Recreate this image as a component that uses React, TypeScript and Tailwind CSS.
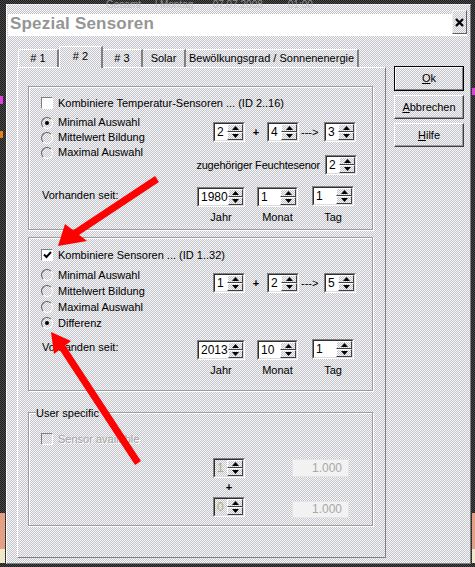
import React from 'react';

const chk = 'bg-[image:repeating-conic-gradient(#c4c4cc_0_25%,#f7f7f7_0_50%)] bg-[length:2px_2px]';
const dark = 'bg-[image:repeating-conic-gradient(#4a4a4a_0_25%,#1c1c1c_0_50%)] bg-[length:2px_2px]';

function Arr({ up }: { up?: boolean }) {
  return (
    <div
      className={`flex flex-1 items-center justify-center border border-t-white border-l-white border-r-[#404040] border-b-[#404040] ${chk}`}
    >
      <svg width="7" height="4" viewBox="0 0 7 4">
        {up ? <polygon points="3.5,0 7,4 0,4" fill="#000" /> : <polygon points="0,0 7,0 3.5,4" fill="#000" />}
      </svg>
    </div>
  );
}

function Spin({ v, w, dis }: { v: string; w: string; dis?: boolean }) {
  return (
    <div className={`h-[20px] shrink-0 border border-t-[#808080] border-l-[#808080] border-r-white border-b-white ${w}`}>
      <div className="flex h-full border border-t-[#303030] border-l-[#303030] border-r-[#dcdcdc] border-b-[#dcdcdc]">
        <div
          className={`flex flex-1 items-center pl-[2px] text-[12px] ${dis ? 'text-[#b4ac7c] ' + chk : 'bg-white text-black'}`}
        >
          {v}
        </div>
        <div className="flex w-[16px] flex-col">
          <Arr up />
          <Arr />
        </div>
      </div>
    </div>
  );
}

function Check({ checked, dis }: { checked?: boolean; dis?: boolean }) {
  return (
    <div
      className={`flex h-[12px] w-[12px] shrink-0 items-center justify-center border border-t-[#808080] border-l-[#808080] border-r-white border-b-white ${dis ? chk : 'bg-white'}`}
    >
      {checked && (
        <svg width="9" height="8" viewBox="0 0 9 8">
          <path d="M1 3.5 L3.5 6 L8 1" stroke="#000" strokeWidth="2" fill="none" />
        </svg>
      )}
    </div>
  );
}

function Radio({ label, on }: { label: string; on?: boolean }) {
  return (
    <div className="flex items-center gap-[5px]">
      <div
        className={`flex h-[12px] w-[12px] items-center justify-center rounded-full border border-t-[#606060] border-l-[#606060] border-r-white border-b-white ${chk}`}
      >
        {on && <div className="h-[4px] w-[4px] rounded-full bg-black" />}
      </div>
      <span>{label}</span>
    </div>
  );
}

function Sum({ a, b, c }: { a: string; b: string; c: string }) {
  return (
    <div className="flex h-[20px] items-center pl-[16px]">
      <Spin v={a} w="w-[32px]" />
      <span className="w-[22px] text-center font-bold">+</span>
      <Spin v={b} w="w-[32px]" />
      <span className="w-[25px] pl-[2px]">---&gt;</span>
      <Spin v={c} w="w-[32px]" />
    </div>
  );
}

function Dates({ y, m, d, lh }: { y: string; m: string; d: string; lh: string }) {
  return (
    <div className="flex">
      <div className={`flex w-[156px] items-center pl-[1px] ${lh}`}>Vorhanden seit:</div>
      <div className="flex">
        <div className="flex w-[48px] flex-col items-center">
          <Spin v={y} w="w-[48px]" />
          <span className="mt-[5px] h-[14px]">Jahr</span>
        </div>
        <div className="ml-[12px] flex w-[41px] flex-col items-center">
          <Spin v={m} w="w-[41px]" />
          <span className="mt-[5px] h-[14px]">Monat</span>
        </div>
        <div className="ml-[14px] flex w-[42px] -mt-[1px] flex-col items-center">
          <Spin v={d} w="w-[42px]" />
          <span className="mt-[6px] h-[14px]">Tag</span>
        </div>
      </div>
    </div>
  );
}

const group = 'relative w-[345px] border border-[#9c9c9c] pl-[12px] shadow-[inset_1px_1px_0_#fff,1px_1px_0_#fff]';

export default function App() {
  return (
    <div className={`relative h-[567px] w-[475px] overflow-hidden font-['Liberation_Sans',Arial,sans-serif] text-[11px] leading-none text-black ${dark}`}>
      <div className="pl-[6px] pt-[4px]">
        <div className={`flex h-[560px] w-[465px] flex-col border border-t-[#eeeeee] border-l-white border-r-[#808080] border-b-[#808080] ${chk}`}>
          {/* title */}
          <div className="ml-[1px] mt-[8px] flex h-[23px] w-[459px] items-start justify-between border-t border-dotted border-[#b8b8b8] bg-white">
            <div className="flex h-[22px] items-center pb-[3px] pl-[2px] text-[17px] font-bold tracking-[0.2px] text-[#959595]">
              Spezial Sensoren
            </div>
            <div
              className={`-mt-[4px] flex h-[24px] w-[15px] items-center justify-center border border-t-[#f0f0f0] border-l-[#f0f0f0] border-r-[#606060] border-b-[#606060] ${chk}`}
            >
              <svg width="9" height="9" viewBox="0 0 9 9">
                <path d="M1 1 L8 8 M8 1 L1 8" stroke="#000" strokeWidth="2.2" />
              </svg>
            </div>
          </div>

          {/* body */}
          <div className="flex pl-[10px] pt-[10px]">
            <div className="flex w-[369px] flex-col">
              <div className="flex h-[21px] items-end pl-[1px]">
                <div className="flex h-[18px] w-[41px] items-center justify-center rounded-tl-[2px] border-t border-l border-white border-r-2 border-r-[#808080]">
                  # 1
                </div>
                <div className={`relative z-10 -mb-[1px] flex h-[22px] w-[44px] items-center justify-center rounded-tl-[2px] border-t border-l border-white border-r-2 border-r-[#808080] pb-[3px] ${chk}`}>
                  # 2
                </div>
                <div className="flex h-[18px] w-[40px] items-center justify-center border-t border-white border-r-2 border-r-[#808080]">
                  # 3
                </div>
                <div className="flex h-[18px] w-[43px] items-center justify-center border-t border-white border-r-2 border-r-[#808080]">
                  Solar
                </div>
                <div className="flex h-[18px] w-[173px] items-center justify-center border-t border-white border-r-2 border-r-[#808080]">
                  Bewölkungsgrad / Sonnenenergie
                </div>
              </div>

              <div className="flex h-[491px] w-[369px] flex-col border border-t-white border-l-white border-r-[#808080] border-b-[#808080] pl-[10px] pt-[18px]">
                {/* group 1 */}
                <div className={`${group} h-[144px] pt-[10px]`}>
                  <div className="flex h-[12px] items-center gap-[5px]">
                    <Check />
                    <span>Kombiniere Temperatur-Sensoren ... (ID 2..16)</span>
                  </div>
                  <div className="mt-[6px] flex">
                    <div className="flex w-[156px] flex-col">
                      <div className="flex h-[15px] items-center"><Radio label="Minimal Auswahl" on /></div>
                      <div className="flex h-[15px] items-center"><Radio label="Mittelwert Bildung" /></div>
                      <div className="flex h-[15px] items-center"><Radio label="Maximal Auswahl" /></div>
                    </div>
                    <div className="flex flex-col pt-[7px]">
                      <Sum a="2" b="4" c="3" />
                      <div className="mt-[13px] flex h-[20px] items-center">
                        <span className="flex w-[128px] justify-end whitespace-nowrap pr-[5px] tracking-[-0.2px]">
                          zugehöriger Feuchtesenor
                        </span>
                        <Spin v="2" w="w-[32px]" />
                      </div>
                    </div>
                  </div>
                  <div className="mt-[12px]">
                    <Dates y="1980" m="1" d="1" lh="h-[16px]" />
                  </div>
                </div>

                {/* group 2 */}
                <div className={`${group} mt-[7px] h-[154px] pt-[11px]`}>
                  <div className="flex h-[12px] items-center gap-[5px]">
                    <Check checked />
                    <span>Kombiniere Sensoren ... (ID 1..32)</span>
                  </div>
                  <div className="mt-[6px] flex">
                    <div className="flex w-[156px] flex-col">
                      <div className="flex h-[16px] items-center"><Radio label="Minimal Auswahl" /></div>
                      <div className="flex h-[16px] items-center"><Radio label="Mittelwert Bildung" /></div>
                      <div className="flex h-[16px] items-center"><Radio label="Maximal Auswahl" /></div>
                      <div className="flex h-[16px] items-center"><Radio label="Differenz" on /></div>
                    </div>
                    <div className="flex flex-col pt-[6px]">
                      <Sum a="1" b="2" c="5" />
                    </div>
                  </div>
                  <div className="mt-[9px]">
                    <Dates y="2013" m="10" d="1" lh="h-[14px]" />
                  </div>
                </div>

                {/* group 3 */}
                <div className={`${group} mt-[21px] h-[114px] pt-[20px]`}>
                  <span className={`absolute -top-[7px] left-[7px] h-[14px] pr-[2px] leading-[14px] ${chk}`}>User specific</span>
                  <div className="flex h-[12px] items-center gap-[5px]">
                    <Check dis />
                    <span className="text-[#a4a4a4] [text-shadow:1px_1px_0_#fff]">Sensor available</span>
                  </div>
                  <div className="ml-[172px] mt-[13px] flex flex-col">
                    <div className="flex h-[20px] items-center">
                      <Spin v="1" w="w-[32px]" dis />
                      <div className="ml-[47px] flex h-[18px] w-[57px] items-center justify-end border border-[#e4e4e4] bg-[#f2f2f2] pr-[6px] text-[12px] text-[#a8a8a8]">
                        1.000
                      </div>
                    </div>
                    <div className="flex h-[19px] w-[32px] items-center justify-center font-bold">+</div>
                    <div className="flex h-[20px] items-center">
                      <Spin v="0" w="w-[32px]" dis />
                      <div className="ml-[47px] mt-[4px] flex h-[17px] w-[57px] items-center justify-end border border-[#e4e4e4] bg-[#f2f2f2] pr-[6px] text-[12px] text-[#a8a8a8]">
                        1.000
                      </div>
                    </div>
                  </div>
                </div>
              </div>
            </div>

            {/* buttons */}
            <div className="ml-[8px] flex w-[70px] flex-col pt-[20px]">
              <div className="h-[25px] border border-black">
                <div className="flex h-full items-center justify-center border border-t-white border-l-white border-r-[#808080] border-b-[#808080]">
                  <span><span className="underline">O</span>k</span>
                </div>
              </div>
              <div className="mt-[4px] flex h-[24px] items-center justify-center border border-t-white border-l-white border-r-[#404040] border-b-[#404040] shadow-[inset_-1px_-1px_0_#9a9a9a]">
                <span><span className="underline">A</span>bbrechen</span>
              </div>
              <div className="mt-[4px] flex h-[24px] items-center justify-center border border-t-white border-l-white border-r-[#404040] border-b-[#404040] shadow-[inset_-1px_-1px_0_#9a9a9a]">
                <span><span className="underline">H</span>ilfe</span>
              </div>
            </div>
          </div>
        </div>
      </div>

      {/* desktop bits behind the dialog edges */}
      <div className="absolute left-0 top-[96px] h-[8px] w-[3px] bg-[#e040e0]" />
      <div className="absolute left-0 top-[131px] h-[7px] w-[3px] bg-[#e08020]" />
      <div className="absolute left-0 top-[513px] h-[36px] w-[5px] bg-[#e4a084]" />
      <div className="absolute left-0 top-[549px] h-[14px] w-[5px] bg-[#f0e8c8]" />
      <div className="absolute right-0 top-[88px] h-[7px] w-[3px] bg-[#e040e0]" />
      <div className="absolute right-0 top-[513px] h-[36px] w-[3px] bg-[#e4a084]" />
      <div className="absolute right-0 top-[549px] h-[14px] w-[3px] bg-[#f0e8c8]" />

      {/* faint status text along the top */}
      <div className="pointer-events-none absolute left-[106px] top-0 whitespace-pre text-[10px] leading-[10px] text-[#b8b8b8] opacity-70">
        Gesamt     l Montag       07.07.2008         01:00
      </div>

      {/* red annotation arrows */}
      <svg className="pointer-events-none absolute left-0 top-0" width="475" height="567" viewBox="0 0 475 567">
        <line x1="157" y1="179" x2="74" y2="234" stroke="#ff0000" strokeWidth="7" />
        <polygon points="58,246 65,224 87,241" fill="#ff0000" />
        <line x1="138" y1="463" x2="62" y2="347" stroke="#ff0000" strokeWidth="7" />
        <polygon points="51,332 71,341 54,354" fill="#ff0000" />
      </svg>
    </div>
  );
}
